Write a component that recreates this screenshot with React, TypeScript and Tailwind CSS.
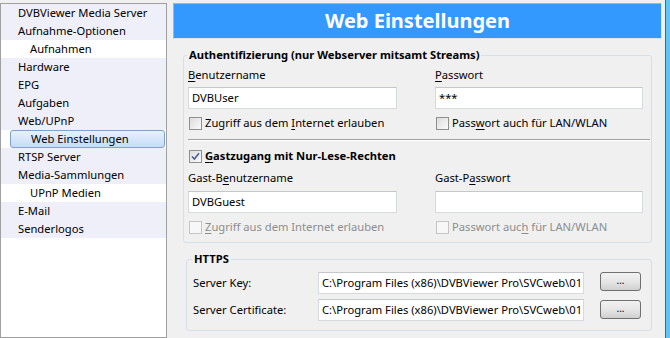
import React from "react";

const tree = [
  { label: "DVBViewer Media Server", child: false },
  { label: "Aufnahme-Optionen", child: false },
  { label: "Aufnahmen", child: true },
  { label: "Hardware", child: false },
  { label: "EPG", child: false },
  { label: "Aufgaben", child: false },
  { label: "Web/UPnP", child: false },
  { label: "Web Einstellungen", child: true, selected: true },
  { label: "RTSP Server", child: false },
  { label: "Media-Sammlungen", child: false },
  { label: "UPnP Medien", child: true },
  { label: "E-Mail", child: false },
  { label: "Senderlogos", child: false },
];

function Key({ children }: { children: React.ReactNode }) {
  return <span className="underline underline-offset-2">{children}</span>;
}

function CheckBox({
  checked = false,
  disabled = false,
  children,
  bold = false,
}: {
  checked?: boolean;
  disabled?: boolean;
  bold?: boolean;
  children: React.ReactNode;
}) {
  return (
    <div className="flex items-center h-[16px]">
      <span
        className={`w-[13px] h-[13px] ml-[1px] border flex items-center justify-center shrink-0 ${
          disabled
            ? "border-[#c4c4c4] bg-[#f7f7f7]"
            : "border-[#8e8f8f] bg-gradient-to-br from-[#dcdcdc] to-[#fbfbfb]"
        }`}
      >
        {checked && (
          <svg width="9" height="9" viewBox="0 0 9 9">
            <path d="M1 4.5 L3.4 7 L8 1.2" fill="none" stroke="#4a5f97" strokeWidth="1.6" />
          </svg>
        )}
      </span>
      <span
        className={`ml-[3px] whitespace-nowrap ${disabled ? "text-[#8d8d8d]" : "text-black"} ${
          bold ? "font-bold" : ""
        }`}
      >
        {children}
      </span>
    </div>
  );
}

function TextBox({ value, width }: { value: string; width: string }) {
  return (
    <div
      className={`${width} h-[22px] bg-white border border-[#d6d9dd] border-t-[#c4c7cc] flex items-center px-[3px] overflow-hidden whitespace-nowrap`}
    >
      {value}
    </div>
  );
}

function Browse() {
  return (
    <div className="w-[41px] h-[19px] ml-[16px] rounded-[3px] border border-[#707070] bg-gradient-to-b from-[#f2f2f2] via-[#e6e6e6] to-[#d0d0d0] flex items-center justify-center text-[10px] leading-none pb-[3px]">
      ...
    </div>
  );
}

export default function App() {
  return (
    <div
      className="w-[670px] h-[338px] bg-[#f0f0f0] flex overflow-hidden text-[11.2px] leading-[16px] text-black"
      style={{ fontFamily: '"Noto Sans", "Open Sans", sans-serif' }}
    >
      {/* tree */}
      <div className="w-[167px] mt-[3px] shrink-0 border border-[#a0a0a0] bg-white">
        {tree.map((t, i) =>
          t.selected ? (
            <div key={i} className="h-[18px] pl-[9px] pr-[1px]">
              <div className="h-[18px] rounded-[3px] border border-[#7da2ce] bg-gradient-to-b from-[#e8f1fc] to-[#c5dcf7] flex items-center pl-[20px]">
                {t.label}
              </div>
            </div>
          ) : (
            <div
              key={i}
              className={`h-[18px] flex items-center ${
                t.child ? "bg-white pl-[29px]" : "bg-[#efeffa] pl-[17px]"
              }`}
            >
              {t.label}
            </div>
          )
        )}
      </div>

      {/* main */}
      <div className="w-[498px] shrink-0 flex flex-col">
        <div className="ml-[6px] mt-[3px] w-[489px] h-[36px] bg-[#3399ff] border border-[#b5b0a8] border-r-[#e4e4e4] border-b-[#e4e4e4] flex items-center justify-center text-white font-bold text-[20px]">
          Web Einstellungen
        </div>

        <fieldset className="ml-[16px] mt-[8px] w-[469px] h-[196px] border border-[#d5dfe5] rounded-[3px] p-0 flex flex-col">
          <legend className="ml-[3px] px-[2px] font-bold leading-[16px]">
            Authentifizierung (nur Webserver mitsamt Streams)
          </legend>
          <div className="flex pl-[4px] mt-[4px]">
            <div className="w-[247px]">
              <div><Key>B</Key>enutzername</div>
              <div className="mt-[4px]">
                <TextBox value="DVBUser" width="w-[209px]" />
              </div>
              <div className="mt-[6px]">
                <CheckBox>
                  Zugriff aus dem <Key>I</Key>nternet erlauben
                </CheckBox>
              </div>
            </div>
            <div>
              <div><Key>P</Key>asswort</div>
              <div className="mt-[4px]">
                <TextBox value="***" width="w-[208px]" />
              </div>
              <div className="mt-[6px]">
                <CheckBox>
                  Pass<Key>w</Key>ort auch für LAN/WLAN
                </CheckBox>
              </div>
            </div>
          </div>
          <div className="ml-[4px] mr-[1px] mt-[8px] h-[1px] bg-[#a0a0a0] border-b border-white box-content"></div>
          <div className="pl-[4px] mt-[7px]">
            <CheckBox checked bold>
              <Key>G</Key>astzugang mit Nur-Lese-Rechten
            </CheckBox>
          </div>
          <div className="flex pl-[4px] mt-[6px]">
            <div className="w-[247px]">
              <div>Gast-B<Key>e</Key>nutzername</div>
              <div className="mt-[5px]">
                <TextBox value="DVBGuest" width="w-[209px]" />
              </div>
              <div className="mt-[6px]">
                <CheckBox disabled>
                  <Key>Z</Key>ugriff aus dem Internet erlauben
                </CheckBox>
              </div>
            </div>
            <div>
              <div>Gast-P<Key>a</Key>sswort</div>
              <div className="mt-[5px]">
                <TextBox value="" width="w-[208px]" />
              </div>
              <div className="mt-[6px]">
                <CheckBox disabled>
                  Passwort auc<Key>h</Key> für LAN/WLAN
                </CheckBox>
              </div>
            </div>
          </div>
        </fieldset>

        <fieldset className="ml-[19px] mt-[8px] w-[466px] h-[80px] border border-[#d5dfe5] rounded-[3px] p-0 flex flex-col">
          <legend className="ml-[5px] px-[2px] font-bold leading-[16px]">HTTPS</legend>
          <div className="flex items-start pl-[6px] mt-[5px]">
            <div className="w-[125px] h-[22px] flex items-center">Server Key:</div>
            <TextBox value="C:\Program Files (x86)\DVBViewer Pro\SVCweb\01" width="w-[266px]" />
            <Browse />
          </div>
          <div className="flex items-start pl-[6px] mt-[5px]">
            <div className="w-[125px] h-[22px] flex items-center">Server Certificate:</div>
            <TextBox value="C:\Program Files (x86)\DVBViewer Pro\SVCweb\01" width="w-[266px]" />
            <div className="mt-[1px]">
              <Browse />
            </div>
          </div>
        </fieldset>
      </div>

      {/* window edge */}
      <div className="flex-1 flex">
        <div className="w-[1px] bg-[#3a6d96]"></div>
        <div className="flex-1 bg-[#5ec8f2]"></div>
      </div>
    </div>
  );
}
